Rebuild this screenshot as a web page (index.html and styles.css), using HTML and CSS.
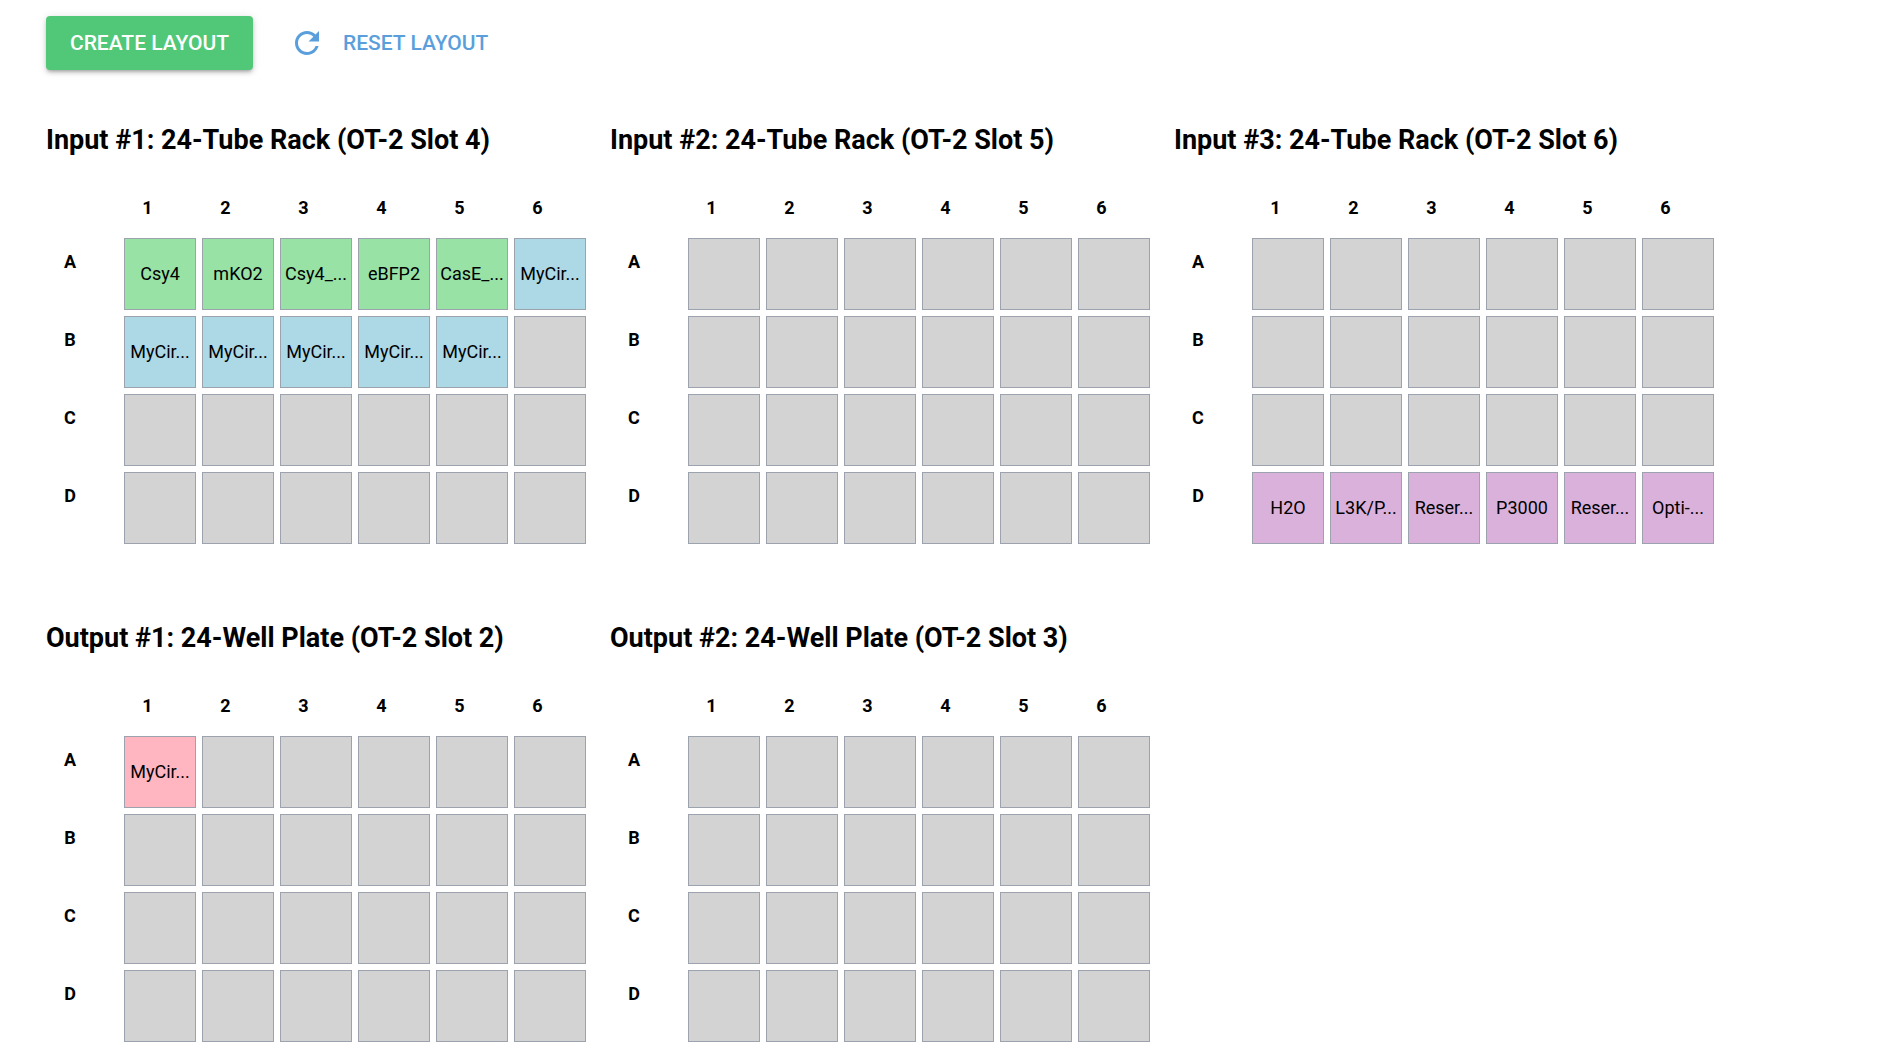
FILE: index.html
```html
<!DOCTYPE html>
<html>
  <head>
    <meta name="viewport" content="width=device-width,initial-scale=1.0">
    <title>Layout</title>
    <link rel="stylesheet" href="styles.css">
  </head>
  <body>
    <div class="toolbar">
      <button type="button" class="create-btn">Create Layout</button>
      <button type="button" class="reset-btn">
        <svg class="reset-icon" viewBox="0 0 24 24"><path d="M17.65 6.35C16.2 4.9 14.21 4 12 4c-4.42 0-7.99 3.58-7.99 8s3.57 8 7.99 8c3.73 0 6.84-2.55 7.73-6h-2.08c-.82 2.33-3.04 4-5.65 4-3.31 0-6-2.69-6-6s2.69-6 6-6c1.66 0 3.14.69 4.22 1.78L13 11h7V4l-2.35 2.35z"/></svg>
        Reset Layout
      </button>
    </div>

    <div class="racks">
      <!-- Inputs -->
      <section class="rack">
        <h2>Input #1: 24-Tube Rack (OT-2 Slot 4)</h2>
        <div class="grid">
          <span></span><b class="col">1</b><b class="col">2</b><b class="col">3</b><b class="col">4</b><b class="col">5</b><b class="col">6</b>
          <b class="row">A</b><div class="cell green">Csy4</div><div class="cell green">mKO2</div><div class="cell green">Csy4_...</div><div class="cell green">eBFP2</div><div class="cell green">CasE_...</div><div class="cell blue">MyCir...</div>
          <b class="row">B</b><div class="cell blue">MyCir...</div><div class="cell blue">MyCir...</div><div class="cell blue">MyCir...</div><div class="cell blue">MyCir...</div><div class="cell blue">MyCir...</div><div class="cell"></div>
          <b class="row">C</b><div class="cell"></div><div class="cell"></div><div class="cell"></div><div class="cell"></div><div class="cell"></div><div class="cell"></div>
          <b class="row">D</b><div class="cell"></div><div class="cell"></div><div class="cell"></div><div class="cell"></div><div class="cell"></div><div class="cell"></div>
        </div>
      </section>

      <section class="rack">
        <h2>Input #2: 24-Tube Rack (OT-2 Slot 5)</h2>
        <div class="grid">
          <span></span><b class="col">1</b><b class="col">2</b><b class="col">3</b><b class="col">4</b><b class="col">5</b><b class="col">6</b>
          <b class="row">A</b><div class="cell"></div><div class="cell"></div><div class="cell"></div><div class="cell"></div><div class="cell"></div><div class="cell"></div>
          <b class="row">B</b><div class="cell"></div><div class="cell"></div><div class="cell"></div><div class="cell"></div><div class="cell"></div><div class="cell"></div>
          <b class="row">C</b><div class="cell"></div><div class="cell"></div><div class="cell"></div><div class="cell"></div><div class="cell"></div><div class="cell"></div>
          <b class="row">D</b><div class="cell"></div><div class="cell"></div><div class="cell"></div><div class="cell"></div><div class="cell"></div><div class="cell"></div>
        </div>
      </section>

      <section class="rack">
        <h2>Input #3: 24-Tube Rack (OT-2 Slot 6)</h2>
        <div class="grid">
          <span></span><b class="col">1</b><b class="col">2</b><b class="col">3</b><b class="col">4</b><b class="col">5</b><b class="col">6</b>
          <b class="row">A</b><div class="cell"></div><div class="cell"></div><div class="cell"></div><div class="cell"></div><div class="cell"></div><div class="cell"></div>
          <b class="row">B</b><div class="cell"></div><div class="cell"></div><div class="cell"></div><div class="cell"></div><div class="cell"></div><div class="cell"></div>
          <b class="row">C</b><div class="cell"></div><div class="cell"></div><div class="cell"></div><div class="cell"></div><div class="cell"></div><div class="cell"></div>
          <b class="row">D</b><div class="cell plum">H2O</div><div class="cell plum">L3K/P...</div><div class="cell plum">Reser...</div><div class="cell plum">P3000</div><div class="cell plum">Reser...</div><div class="cell plum">Opti-...</div>
        </div>
      </section>

      <!-- Outputs -->
      <section class="rack">
        <h2>Output #1: 24-Well Plate (OT-2 Slot 2)</h2>
        <div class="grid">
          <span></span><b class="col">1</b><b class="col">2</b><b class="col">3</b><b class="col">4</b><b class="col">5</b><b class="col">6</b>
          <b class="row">A</b><div class="cell pink">MyCir...</div><div class="cell"></div><div class="cell"></div><div class="cell"></div><div class="cell"></div><div class="cell"></div>
          <b class="row">B</b><div class="cell"></div><div class="cell"></div><div class="cell"></div><div class="cell"></div><div class="cell"></div><div class="cell"></div>
          <b class="row">C</b><div class="cell"></div><div class="cell"></div><div class="cell"></div><div class="cell"></div><div class="cell"></div><div class="cell"></div>
          <b class="row">D</b><div class="cell"></div><div class="cell"></div><div class="cell"></div><div class="cell"></div><div class="cell"></div><div class="cell"></div>
        </div>
      </section>

      <section class="rack">
        <h2>Output #2: 24-Well Plate (OT-2 Slot 3)</h2>
        <div class="grid">
          <span></span><b class="col">1</b><b class="col">2</b><b class="col">3</b><b class="col">4</b><b class="col">5</b><b class="col">6</b>
          <b class="row">A</b><div class="cell"></div><div class="cell"></div><div class="cell"></div><div class="cell"></div><div class="cell"></div><div class="cell"></div>
          <b class="row">B</b><div class="cell"></div><div class="cell"></div><div class="cell"></div><div class="cell"></div><div class="cell"></div><div class="cell"></div>
          <b class="row">C</b><div class="cell"></div><div class="cell"></div><div class="cell"></div><div class="cell"></div><div class="cell"></div><div class="cell"></div>
          <b class="row">D</b><div class="cell"></div><div class="cell"></div><div class="cell"></div><div class="cell"></div><div class="cell"></div><div class="cell"></div>
        </div>
      </section>
    </div>
  </body>
</html>
```

FILE: styles.css
```css
body { margin: 0; padding: 16px 46px; background: #fff; color: #000; font-family: Roboto, "Liberation Sans", sans-serif; }

.toolbar { display: flex; align-items: center; height: 54px; }

.create-btn {
  height: 54px;
  width: 207px;
  padding: 0;
  border: none;
  border-radius: 4px;
  background: #50c878;
  color: #fff;
  font: 500 21px Roboto, sans-serif;
  text-transform: uppercase;
  box-shadow: 0 3px 3px -2px rgba(0,0,0,0.2), 0 3px 4px rgba(0,0,0,0.14), 0 1px 8px rgba(0,0,0,0.12);
}

.reset-btn {
  display: flex;
  align-items: center;
  gap: 18px;
  margin-left: 36px;
  padding: 0;
  border: none;
  background: none;
  color: #5a9fdc;
  font: 500 21px Roboto, sans-serif;
  text-transform: uppercase;
}
.reset-icon { width: 36px; height: 36px; fill: #5a9fdc; }

.racks { display: grid; grid-template-columns: repeat(3, 540px); column-gap: 24px; row-gap: 77px; margin-top: 53px; }

.rack h2 { margin: 0 0 29px; height: 32px; font-size: 27px; line-height: 34px; font-weight: 700; white-space: nowrap; }

.grid { display: grid; grid-template-columns: repeat(7, 72px); grid-template-rows: 48px repeat(4, 72px); gap: 6px; }

.col { font-size: 18px; font-weight: 700; line-height: 47px; text-align: center; padding-right: 25px; }
.row { font-size: 18px; font-weight: 700; line-height: 22px; text-align: center; padding-right: 24px; padding-top: 13px; }

.cell {
  display: flex;
  align-items: center;
  justify-content: center;
  box-sizing: border-box;
  padding-bottom: 2px;
  border: 1px solid #9ca3af;
  background: #d3d3d3;
  font-size: 18px;
  white-space: nowrap;
}
.green { background: #98e2a5; }
.blue { background: #add8e6; }
.plum { background: #dab1da; }
.pink { background: #ffb6c1; }
```
